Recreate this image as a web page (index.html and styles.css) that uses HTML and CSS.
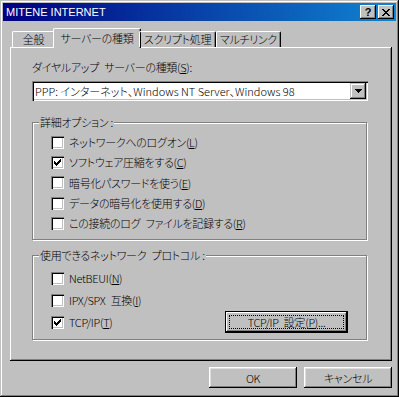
FILE: index.html
```html
<!DOCTYPE html>
<html lang="ja">
<head>
    <meta charset="UTF-8">
    <title>MITENE INTERNET</title>
    <link rel="stylesheet" href="styles.css">
</head>
<body>
    <div class="janela">
        <div class="janela__titulo">
            <span class="janela__titulo-texto">MITENE INTERNET</span>
            <div class="janela__controles">
                <span class="controle controle--ajuda">?</span>
                <span class="controle">
                    <svg width="8" height="7" viewBox="0 0 8 7" shape-rendering="crispEdges">
                        <path d="M0 0h2v1h-2zM6 0h2v1h-2zM1 1h2v1h-2zM5 1h2v1h-2zM2 2h4v1h-4zM3 3h2v1h-2zM2 4h4v1h-4zM1 5h2v1h-2zM5 5h2v1h-2zM0 6h2v1h-2zM6 6h2v1h-2z" fill="#000"/>
                    </svg>
                </span>
            </div>
        </div>

        <div class="abas">
            <span class="aba aba--geral">全般</span>
            <span class="aba aba--ativa">サーバーの種類</span>
            <span class="aba aba--script">スクリプト処理</span>
            <span class="aba aba--multi">マルチリンク</span>
        </div>

        <div class="painel">
            <label class="rotulo">ダイヤルアップ&ensp;サーバーの種類(<u>S</u>):</label>
            <div class="combo">
                <span class="combo__texto">PPP: インターネット、Windows NT Server、Windows 98</span>
                <span class="combo__seta">
                    <svg width="7" height="4" viewBox="0 0 7 4" shape-rendering="crispEdges">
                        <path d="M0 0h7v1h-7zM1 1h5v1h-5zM2 2h3v1h-3zM3 3h1v1h-1z" fill="#000"/>
                    </svg>
                </span>
            </div>

            <div class="grupo grupo--opcoes">
                <span class="grupo__legenda">詳細オプション :</span>
                <div class="linha"><span class="caixa"></span>ネットワークへのログオン(<u>L</u>)</div>
                <div class="linha">
                    <span class="caixa">
                        <svg width="13" height="13" viewBox="0 0 13 13" shape-rendering="crispEdges">
                            <path d="M3 5h1v3h-1zM4 6h1v3h-1zM5 7h1v3h-1zM6 6h1v3h-1zM7 5h1v3h-1zM8 4h1v3h-1zM9 3h1v3h-1z" fill="#000"/>
                        </svg>
                    </span>ソフトウェア圧縮をする(<u>C</u>)
                </div>
                <div class="linha"><span class="caixa"></span>暗号化パスワードを使う(<u>E</u>)</div>
                <div class="linha"><span class="caixa"></span>データの暗号化を使用する(<u>D</u>)</div>
                <div class="linha"><span class="caixa"></span>この接続のログ&ensp;ファイルを記録する(<u>R</u>)</div>
            </div>

            <div class="grupo grupo--protocolos">
                <span class="grupo__legenda">使用できるネットワーク&ensp;プロトコル :</span>
                <div class="linha linha--alta"><span class="caixa"></span>NetBEUI(<u>N</u>)</div>
                <div class="linha linha--alta"><span class="caixa"></span>IPX/SPX&ensp;互換(<u>I</u>)</div>
                <div class="linha linha--alta">
                    <span class="caixa">
                        <svg width="13" height="13" viewBox="0 0 13 13" shape-rendering="crispEdges">
                            <path d="M3 5h1v3h-1zM4 6h1v3h-1zM5 7h1v3h-1zM6 6h1v3h-1zM7 5h1v3h-1zM8 4h1v3h-1zM9 3h1v3h-1z" fill="#000"/>
                        </svg>
                    </span>TCP/IP(<u>T</u>)
                    <span class="botao botao--padrao"><span class="botao__foco">TCP/IP&ensp;設定(<u>P</u>)...</span></span>
                </div>
            </div>
        </div>

        <div class="rodape">
            <span class="botao botao--rodape">OK</span>
            <span class="botao botao--rodape">キャンセル</span>
        </div>
    </div>
</body>
</html>
```

FILE: styles.css
```css
body {
    margin: 0;
    background-color: #c0c0c0;
    font-family: "Noto Sans CJK JP", "Liberation Sans", sans-serif;
    font-size: 11px;
    font-weight: 300;
    letter-spacing: -0.3px;
    font-feature-settings: "palt";
    color: #000;
}

.janela {
    width: 399px;
    height: 397px;
    box-sizing: border-box;
    padding: 3px;
    background-color: #c0c0c0;
    box-shadow: inset -1px -1px #000, inset 1px 1px #c0c0c0, inset -2px -2px #808080, inset 2px 2px #fff;
}

.janela__titulo {
    height: 18px;
    display: flex;
    align-items: center;
    justify-content: space-between;
    padding: 0 2px 0 3px;
    background: linear-gradient(to right, #000080, #1084d0);
}

.janela__titulo-texto {
    color: #fff;
    font-family: "Liberation Sans", sans-serif;
    font-size: 11px;
    font-weight: normal;
    letter-spacing: 0;
}

.janela__controles {
    display: flex;
    gap: 2px;
}

.controle {
    width: 16px;
    height: 14px;
    box-sizing: border-box;
    display: flex;
    align-items: center;
    justify-content: center;
    background-color: #c0c0c0;
    box-shadow: inset -1px -1px #000, inset 1px 1px #fff, inset -2px -2px #808080;
    font-family: "Liberation Sans", sans-serif;
    font-weight: bold;
    font-size: 11px;
}

.abas {
    display: flex;
    align-items: flex-end;
    height: 21px;
    margin: 5px 0 0 9px;
    position: relative;
    z-index: 1;
}

.aba {
    height: 16px;
    box-sizing: border-box;
    text-align: center;
    line-height: 15px;
    border-top: 1px solid #fff;
    border-left: 1px solid #fff;
    border-right: 1px solid #000;
    box-shadow: inset -1px 0 #808080;
    border-radius: 2px 2px 0 0;
}

.aba--geral {
    width: 43px;
}

.aba--ativa {
    width: 88px;
    height: 20px;
    margin: 0 -2px -1px;
    padding-top: 1px;
    line-height: 16px;
    background-color: #c0c0c0;
}

.aba--script {
    width: 77px;
}

.aba--multi {
    width: 65px;
}

.painel {
    height: 314px;
    margin: 0 4px 0 7px;
    box-sizing: border-box;
    padding: 13px 0 0 22px;
    box-shadow: inset -1px -1px #000, inset 1px 1px #fff, inset -2px -2px #808080;
}

.rotulo {
    display: block;
    height: 14px;
    line-height: 14px;
}

.combo {
    width: 336px;
    height: 20px;
    margin-top: 7px;
    box-sizing: border-box;
    display: flex;
    align-items: center;
    justify-content: space-between;
    padding: 0 2px 0 3px;
    background-color: #fff;
    letter-spacing: 0;
    box-shadow: inset 1px 1px #808080, inset 2px 2px #000, inset -1px -1px #fff, inset -2px -2px #c0c0c0;
}

.combo__seta {
    width: 16px;
    height: 16px;
    box-sizing: border-box;
    display: flex;
    align-items: center;
    justify-content: center;
    background-color: #c0c0c0;
    box-shadow: inset -1px -1px #000, inset 1px 1px #c0c0c0, inset -2px -2px #808080, inset 2px 2px #fff;
}

.grupo {
    position: relative;
    width: 335px;
    box-sizing: border-box;
    border: 1px solid #808080;
    box-shadow: inset 1px 1px #fff, 1px 1px #fff;
}

.grupo--opcoes {
    height: 118px;
    margin-top: 21px;
    padding-top: 9px;
}

.grupo--protocolos {
    height: 85px;
    margin-top: 15px;
    padding-top: 11px;
}

.grupo__legenda {
    position: absolute;
    top: -8px;
    left: 6px;
    padding: 0 1px;
    line-height: 14px;
    background-color: #c0c0c0;
}

.linha {
    height: 20.3px;
    display: flex;
    align-items: center;
    padding-left: 18px;
}

.linha--alta {
    height: 22px;
}

.caixa {
    width: 13px;
    height: 13px;
    margin-right: 5px;
    box-sizing: border-box;
    flex-shrink: 0;
    background-color: #fff;
    box-shadow: inset 1px 1px #808080, inset 2px 2px #000, inset -1px -1px #fff, inset -2px -2px #c0c0c0;
}

.caixa svg {
    display: block;
}

.botao {
    display: flex;
    align-items: center;
    justify-content: center;
    box-sizing: border-box;
    background-color: #c0c0c0;
    box-shadow: inset -1px -1px #000, inset 1px 1px #fff, inset -2px -2px #808080;
}

.botao--padrao {
    width: 123px;
    height: 22px;
    margin: 0 18px 0 auto;
    border: 1px solid #000;
    padding: 3px;
}

.botao__foco {
    width: 100%;
    height: 100%;
    box-sizing: border-box;
    border: 1px dotted #000;
    display: flex;
    align-items: center;
    justify-content: center;
    line-height: 12px;
}

.rodape {
    display: flex;
    justify-content: flex-end;
    gap: 7px;
    margin: 6px 4px 0 0;
}

.botao--rodape {
    width: 88px;
    height: 21px;
    box-shadow: inset -1px -1px #000, inset 1px 1px #fff, inset -2px -2px #808080, inset 2px 2px #dfdfdf;
}
```
